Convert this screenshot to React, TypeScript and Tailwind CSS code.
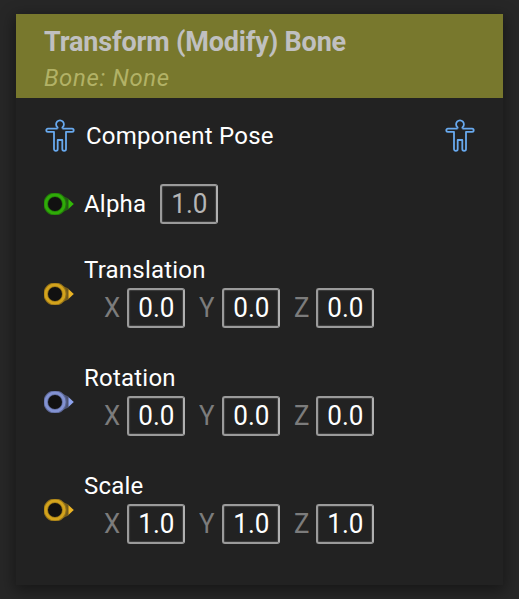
type PinTone = { ring: string; edge: string; tip: string };

const GREEN: PinTone = { ring: '#2fab08', edge: '#23780b', tip: '#32b808' };
const GOLD: PinTone = { ring: '#d3a31c', edge: '#95731a', tip: '#eab325' };
const BLUE: PinTone = { ring: '#8292d2', edge: '#5d6896', tip: '#8ea3ee' };

function PoseIcon() {
  return (
    <svg width="32" height="34" viewBox="0 0 32 34" fill="none" stroke="#68a9ee" strokeWidth="1.8" strokeLinejoin="round" className="block">
      <path d="M13.6 9.6 V8.4 A3.9 3.9 0 1 1 18.4 8.4 V9.6" />
      <path d="M13.6 9.6 H3.9 a1.6 1.6 0 0 0 0 3.2 H10 V30 a1.8 1.8 0 0 0 3.7 0 V21 H18.3 V30 a1.8 1.8 0 0 0 3.7 0 V12.8 H28.1 a1.6 1.6 0 0 0 0 -3.2 H18.4" />
    </svg>
  );
}

function Pin({ tone }: { tone: PinTone }) {
  return (
    <svg width="30" height="22" viewBox="0 0 30 22" className="block shrink-0">
      <path d="M19 3 L24.5 5.5 V16.5 L19 19 Z" fill={tone.edge} opacity="0.7" />
      <circle cx="11" cy="11" r="9.3" fill="#111111" stroke={tone.edge} strokeWidth="4.6" />
      <circle cx="11" cy="11" r="9.2" stroke={tone.ring} strokeWidth="2.8" fill="none" />
      <path d="M24.4 6 L29.8 11 L24.4 16 Z" fill={tone.tip} />
    </svg>
  );
}

function ValueBox({ value, dim = false }: { value: string; dim?: boolean }) {
  return (
    <div className={`flex h-10 w-[58px] shrink-0 items-center justify-center rounded-[3px] border-2 border-[#9b9b9b] border-r-[#b0b0b0] text-[28px] leading-none shadow-[inset_0_0_1px_1px_#404040] ${dim ? 'text-[#b5b5b5]' : 'text-white'}`}>
      <span className="scale-x-[0.93]">{value}</span>
    </div>
  );
}

function VectorRow({ label, value, tone }: { label: string; value: string; tone: PinTone }) {
  return (
    <div className="flex h-[108px] items-start">
      <div className="pt-[31px]">
        <Pin tone={tone} />
      </div>
      <div className="ml-[10px] pt-[3px]">
        <div className="h-[33px] pt-px text-[24px] leading-[28px] tracking-[0.22px]">{label}</div>
        <div className="flex items-center pl-5 text-[28px] leading-none text-[#7c7c7c]">
          <span className="w-[23px] origin-left scale-x-[0.92]">X</span>
          <ValueBox value={value} />
          <span className="ml-[14px] w-[23px] origin-left scale-x-[0.92]">Y</span>
          <ValueBox value={value} />
          <span className="ml-[14px] w-[22px] origin-left scale-x-[0.92]">Z</span>
          <ValueBox value={value} />
        </div>
      </div>
    </div>
  );
}

export default function App() {
  return (
    <main className="h-[599px] w-[519px] overflow-hidden bg-[#272727] px-4 pt-[14px] font-['Roboto',sans-serif] text-white">
      <section className="h-[571px] bg-[#222222] shadow-[0_4px_14px_2px_rgba(0,0,0,0.4)]">
        <header className="h-[84px] bg-[#78782d] pl-7 pt-3">
          <h1 className="whitespace-nowrap text-[27px] leading-8 font-bold tracking-[-0.17px] text-[#c0c0c0]">Transform (Modify) Bone</h1>
          <p className="mt-[6px] text-[24px] leading-7 italic tracking-[0.6px] text-[#b2b266]">Bone: None</p>
        </header>
        <div className="pl-7">
          <div className="flex h-[76px] items-center pr-[27px]">
            <PoseIcon />
            <span className="ml-[10px] flex-1 text-[24px] tracking-[0.25px]">Component Pose</span>
            <PoseIcon />
          </div>
          <div className="flex h-[60px] items-center">
            <Pin tone={GREEN} />
            <span className="ml-[10px] w-[76px] text-[24px] tracking-[0.2px]">Alpha</span>
            <ValueBox value="1.0" dim />
          </div>
          <div className="pt-[18px]">
            <VectorRow label="Translation" value="0.0" tone={GOLD} />
            <VectorRow label="Rotation" value="0.0" tone={BLUE} />
            <VectorRow label="Scale" value="1.0" tone={GOLD} />
          </div>
        </div>
      </section>
    </main>
  );
}
